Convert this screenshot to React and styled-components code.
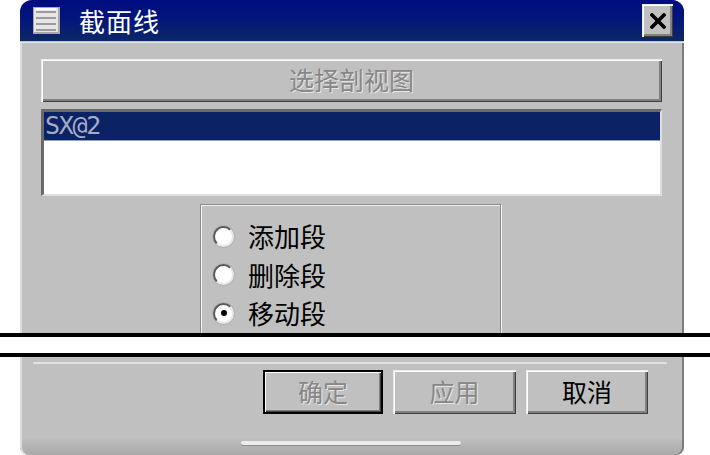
import React from "react";
import styled, { createGlobalStyle, css } from "styled-components";

const Global = createGlobalStyle`
  html, body { margin: 0; padding: 0; background: #ffffff; }
  body { font-family: "Noto Sans CJK SC", "Noto Sans", sans-serif; }
`;

const CJK = `"Noto Sans CJK SC", "Noto Sans", sans-serif`;

const Page = styled.div`
  width: 710px;
  height: 455px;
  overflow: hidden;
  background: #ffffff;
  display: flex;
  flex-direction: column;
`;

const WindowPart = styled.div`
  margin-left: 20px;
  width: 664px;
  background: #c0c0c0;
  box-shadow: inset 2px 0 #dcdcdc, inset -2px 0 #7c7c7c;
  overflow: hidden;
  flex-shrink: 0;
`;

const Upper = styled(WindowPart)`
  height: 333px;
  border-radius: 12px 12px 0 0;
  display: flex;
  flex-direction: column;
`;

const Lower = styled(WindowPart)`
  height: 98px;
  border-radius: 0 0 8px 8px;
  display: flex;
  flex-direction: column;
  background: linear-gradient(to bottom, #c0c0c0 0%, #c0c0c0 82%, #a8a8a8 100%);
`;

const TitleBar = styled.div`
  height: 42px;
  flex-shrink: 0;
  display: flex;
  align-items: center;
  padding-left: 13px;
  padding-right: 11px;
  background: linear-gradient(to bottom, #000b82 0%, #03177a 50%, #0c2866 100%);
  border-bottom: 1px solid #b8c4dc;
  box-sizing: border-box;
`;

const Title = styled.span`
  margin-left: 19px;
  color: #ffffff;
  font-family: ${CJK};
  font-size: 26px;
  line-height: 1;
  letter-spacing: 1px;
`;

const bevel = css`
  background: #c0c0c0;
  box-shadow: inset 1px 1px #ececec, inset 2px 2px #ffffff, inset -1px -1px #3e3e3e,
    inset -3px -3px #808080;
`;

const CloseButton = styled.div`
  margin-left: auto;
  width: 31px;
  height: 33px;
  ${bevel};
  display: flex;
  align-items: center;
  justify-content: center;
`;

const UpperBody = styled.div`
  flex: 1;
  display: flex;
  flex-direction: column;
  padding: 17px 22px 0 21px;
  box-shadow: inset 0 1px #e4e4e4;
`;

const PushButton = styled.div`
  box-sizing: border-box;
  height: ${(p) => p.$h || 44}px;
  width: ${(p) => (p.$w ? `${p.$w}px` : "100%")};
  flex-shrink: 0;
  ${bevel};
  display: flex;
  align-items: center;
  justify-content: center;
  font-family: ${CJK};
  font-size: 25px;
  line-height: 1;
  padding-bottom: 2px;
  color: ${(p) => (p.$disabled ? "#878787" : "#000000")};
  text-shadow: ${(p) => (p.$disabled ? "1px 1px #e6e6e6" : "none")};
  ${(p) =>
    p.$default &&
    css`
      box-shadow: inset 0 0 0 2px #000000, inset 3px 3px #ffffff, inset -3px -3px #404040,
        inset -4px -4px #808080;
    `}
`;

const ListBox = styled.div`
  margin-top: 7px;
  height: 87px;
  flex-shrink: 0;
  background: #ffffff;
  box-sizing: border-box;
  border-style: solid;
  border-width: 3px 2px 2px 3px;
  border-color: #6a6a6a #dedede #dedede #6a6a6a;
`;

const ListItem = styled.div`
  height: 28px;
  background: ${(p) => (p.$selected ? "#0b2264" : "transparent")};
  color: ${(p) => (p.$selected ? "#a3abc6" : "#000")};
  font-family: "DejaVu Sans Mono", "Liberation Mono", monospace;
  font-size: 25px;
  letter-spacing: -1.3px;
  line-height: 28px;
  padding-left: 1px;
  border-bottom: 1px solid #8ea0cc;
`;

const GroupBox = styled.div`
  margin-top: 8px;
  margin-left: 159px;
  width: 301px;
  height: 160px;
  flex-shrink: 0;
  box-sizing: border-box;
  border: 1px solid #8a8a8a;
  box-shadow: 1px 1px #f2f2f2, inset 1px 1px #f2f2f2;
  padding-top: 12px;
  padding-left: 12px;
  display: flex;
  flex-direction: column;
`;

const RadioRow = styled.div`
  height: 38.5px;
  display: flex;
  align-items: center;
`;

const RadioDot = styled.span`
  width: 21px;
  height: 21px;
  box-sizing: border-box;
  border-radius: 50%;
  background: #ffffff;
  border: 2px solid;
  border-color: #5a5a5a #e8e8e8 #e8e8e8 #5a5a5a;
  box-shadow: 0 0 0 1px #b4b4b4;
  display: flex;
  align-items: center;
  justify-content: center;
  &::after {
    content: "";
    width: 6px;
    height: 6px;
    border-radius: 50%;
    background: ${(p) => (p.$checked ? "#000" : "transparent")};
  }
`;

const RadioLabel = styled.span`
  margin-left: 14px;
  font-family: ${CJK};
  font-size: 26px;
  line-height: 1;
  color: #000;
`;

const CutBand = styled.div`
  height: 24px;
  flex-shrink: 0;
  box-sizing: border-box;
  border-top: 4px solid #000;
  border-bottom: 4px solid #000;
  background: #ffffff;
`;

const Separator = styled.div`
  margin: 5px 17px 0 13px;
  height: 0;
  border-top: 2px solid #e2e2e2;
  border-radius: 2px;
`;

const ButtonRow = styled.div`
  display: flex;
  justify-content: flex-end;
  gap: 10px;
  padding-right: 36px;
  margin-top: 6px;
`;

const BottomBar = styled.div`
  margin-top: 27px;
  margin-left: 221px;
  width: 220px;
  height: 4px;
  border-radius: 2px;
  background: #ececec;
  box-shadow: 0 1px #8c8c8c;
`;

const MenuIcon = () => (
  <svg width="27" height="27" viewBox="0 0 27 27">
    <rect x="0" y="0" width="27" height="27" fill="#a8a8a8" />
    <rect x="1" y="1" width="24" height="24" fill="#e6e6e6" />
    {[4, 10, 16, 22].map((y) => (
      <rect key={y} x="3" y={y} width="20" height="2" fill="#9c9c9c" />
    ))}
    <rect x="3" y="1" width="20" height="2" fill="#fafafa" />
  </svg>
);

const CloseIcon = () => (
  <svg width="16" height="16" viewBox="0 0 16 16">
    <path d="M2 2 L14 14 M14 2 L2 14" stroke="#000" strokeWidth="3.6" strokeLinecap="square" />
  </svg>
);

export default function App() {
  return (
    <>
      <Global />
      <Page>
        <Upper>
          <TitleBar>
            <MenuIcon />
            <Title>截面线</Title>
            <CloseButton>
              <CloseIcon />
            </CloseButton>
          </TitleBar>
          <UpperBody>
            <PushButton $h={43} $disabled>
              选择剖视图
            </PushButton>
            <ListBox>
              <ListItem $selected>SX@2</ListItem>
            </ListBox>
            <GroupBox>
              <RadioRow>
                <RadioDot />
                <RadioLabel>添加段</RadioLabel>
              </RadioRow>
              <RadioRow>
                <RadioDot />
                <RadioLabel>删除段</RadioLabel>
              </RadioRow>
              <RadioRow>
                <RadioDot $checked />
                <RadioLabel>移动段</RadioLabel>
              </RadioRow>
            </GroupBox>
          </UpperBody>
        </Upper>
        <CutBand />
        <Lower>
          <Separator />
          <ButtonRow>
            <PushButton $w={120} $disabled $default>
              确定
            </PushButton>
            <PushButton $w={123} $disabled>
              应用
            </PushButton>
            <PushButton $w={122}>取消</PushButton>
          </ButtonRow>
          <BottomBar />
        </Lower>
      </Page>
    </>
  );
}
